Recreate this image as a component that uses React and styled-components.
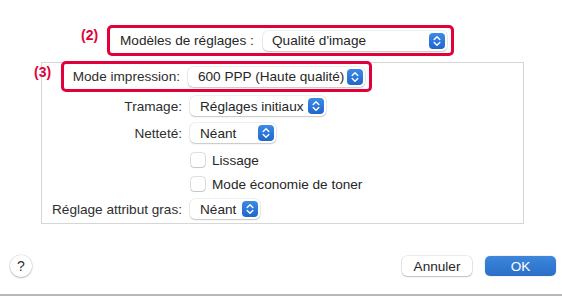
import React from 'react';
import styled, { createGlobalStyle } from 'styled-components';

const Global = createGlobalStyle`
  body {
    margin: 0;
    background: #ffffff;
  }
`;

const Window = styled.div`
  width: 562px;
  height: 296px;
  box-sizing: border-box;
  position: relative;
  overflow: hidden;
  background: #ffffff;
  font-family: 'Liberation Sans', Arial, sans-serif;
  font-size: 13.6px;
  color: #262626;
  border-bottom: 2px solid #b9b9b9;
`;

const TopRow = styled.div`
  display: flex;
  align-items: flex-start;
  padding: 25px 0 0 81px;
`;

const Tag = styled.div`
  font-weight: 700;
  font-size: 14px;
  color: #e2003a;
  width: 26px;
  line-height: 16px;
  margin-top: 2px;
`;

const Marked = styled.div`
  display: flex;
  align-items: center;
  flex-shrink: 0;
  box-sizing: border-box;
  height: 31px;
  width: ${p => p.$width}px;
  border: 3px solid #e2003a;
  border-radius: 5px;
  padding-left: ${p => p.$pad}px;
  margin-left: ${p => p.$left || 0}px;
  margin-top: ${p => p.$top || 0}px;
`;

const TopLabel = styled.span`
  width: 143px;
  white-space: nowrap;
`;

const Panel = styled.div`
  position: relative;
  margin: 6px 0 0 41px;
  width: 483px;
  height: 162px;
  box-sizing: border-box;
  border: 1px solid #d6d6d6;
  display: flex;
  flex-direction: column;
`;

const PanelTag = styled(Tag)`
  position: absolute;
  left: -8px;
  top: -1px;
`;

const Row = styled.div`
  display: flex;
  align-items: center;
  height: 20px;
  margin-top: ${p => p.$top}px;
`;

const Label = styled.span`
  width: ${p => p.$w}px;
  text-align: right;
  white-space: nowrap;
  color: #2e2e2e;
  margin-right: 8px;
`;

const Popup = styled.div`
  display: flex;
  align-items: center;
  justify-content: space-between;
  box-sizing: border-box;
  width: ${p => p.$w}px;
  height: 20px;
  padding: 0 2px 0 ${p => p.$pad || 10}px;
  background: #ffffff;
  border-radius: 5px;
  box-shadow: 0 0 0 0.5px rgba(0, 0, 0, 0.12), 0 1px 1.5px rgba(0, 0, 0, 0.18);
  white-space: nowrap;
`;

const Stepper = styled.div`
  width: 16px;
  height: 16px;
  border-radius: 4px;
  background: linear-gradient(#3d8ae8, #1f67cc);
  display: flex;
  align-items: center;
  justify-content: center;
`;

const Check = styled.span`
  width: 14px;
  height: 14px;
  box-sizing: border-box;
  border-radius: 3px;
  background: #fff;
  box-shadow: 0 0 0 0.5px rgba(0, 0, 0, 0.25), 0 1px 1px rgba(0, 0, 0, 0.12);
  margin: 0 7px 0 1px;
`;

const Footer = styled.div`
  display: flex;
  align-items: center;
  padding: 0 6px 0 10px;
  margin-top: 31px;
`;

const Help = styled.div`
  width: 22px;
  height: 22px;
  border-radius: 50%;
  background: #fff;
  box-shadow: 0 0 0 0.5px rgba(0, 0, 0, 0.15), 0 1px 2px rgba(0, 0, 0, 0.2);
  display: flex;
  align-items: center;
  justify-content: center;
  font-size: 14px;
  color: #333;
  margin-right: auto;
`;

const Button = styled.div`
  width: ${p => p.$w}px;
  height: 20px;
  border-radius: 5px;
  display: flex;
  align-items: center;
  justify-content: center;
  margin-left: ${p => p.$gap || 0}px;
  background: ${p => (p.$primary ? 'linear-gradient(#3c87dc, #2a6ec8)' : '#ffffff')};
  color: ${p => (p.$primary ? '#ffffff' : '#262626')};
  box-shadow: ${p =>
    p.$primary
      ? '0 0 0 0.5px rgba(0,0,0,0.1)'
      : '0 0 0 0.5px rgba(0,0,0,0.15), 0 1px 1.5px rgba(0,0,0,0.2)'};
`;

const Arrows = () => (
  <Stepper>
    <svg width="8" height="12" viewBox="0 0 8 12">
      <path d="M1.2 4.5 L4 1.7 L6.8 4.5 M1.2 7.5 L4 10.3 L6.8 7.5" fill="none" stroke="#fff" strokeWidth="1.4" strokeLinecap="round" strokeLinejoin="round" />
    </svg>
  </Stepper>
);

const Select = ({ w, pad, children }) => (
  <Popup $w={w} $pad={pad}>
    <span>{children}</span>
    <Arrows />
  </Popup>
);

export default function App() {
  return (
    <Window>
      <Global />
      <TopRow>
        <Tag>(2)</Tag>
        <Marked $width={347} $pad={10}>
          <TopLabel>Modèles de réglages :</TopLabel>
          <Select w={184} pad={9}>Qualité d'image</Select>
        </Marked>
      </TopRow>

      <Panel>
        <PanelTag>(3)</PanelTag>
        <Marked $width={311} $pad={0} $left={19} $top={-2}>
          <Label $w={116}>Mode impression:</Label>
          <Select w={177}>600 PPP (Haute qualité)</Select>
        </Marked>
        <Row $top={4}>
          <Label $w={140}>Tramage:</Label>
          <Select w={136}>Réglages initiaux</Select>
        </Row>
        <Row $top={7}>
          <Label $w={140}>Netteté:</Label>
          <Select w={86}>Néant</Select>
        </Row>
        <Row $top={7}>
          <Label $w={140} />
          <Check />
          <span>Lissage</span>
        </Row>
        <Row $top={4}>
          <Label $w={140} />
          <Check />
          <span>Mode économie de toner</span>
        </Row>
        <Row $top={5}>
          <Label $w={140}>Réglage attribut gras:</Label>
          <Select w={70}>Néant</Select>
        </Row>
      </Panel>

      <Footer>
        <Help>?</Help>
        <Button $w={70}>Annuler</Button>
        <Button $w={71} $gap={13} $primary>OK</Button>
      </Footer>
    </Window>
  );
}
